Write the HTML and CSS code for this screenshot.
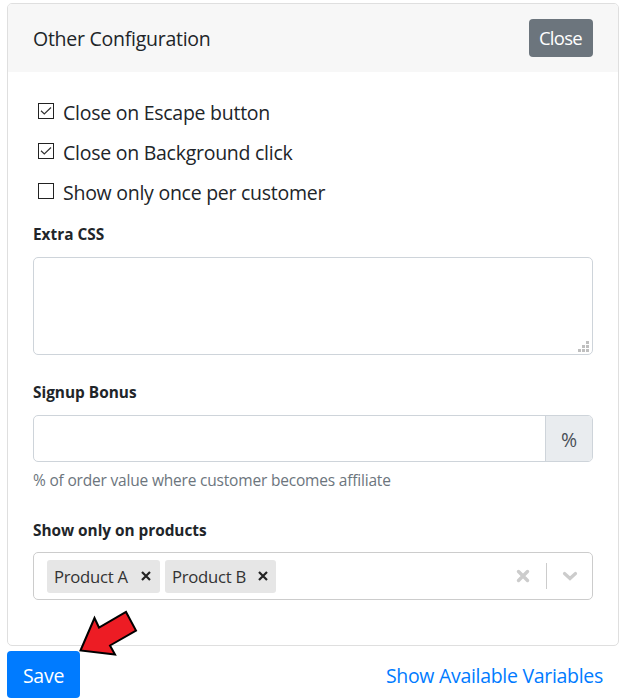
FILE: index.html
```html
<!DOCTYPE html>
<html lang="en">
<head>
<meta charset="utf-8">
<title>Other Configuration</title>
<link rel="stylesheet" href="styles.css">
</head>
<body>
<main class="page">
  <section class="card">
    <header class="card-header">
      <span class="title">Other Configuration</span>
      <button class="btn close-btn" type="button"><span>Close</span></button>
    </header>
    <div class="card-body">
      <div class="check"><span class="box"><svg viewBox="0 0 16 16"><path d="M3 7.8 6.3 11 13 4.5"/></svg></span><span class="check-text">Close on Escape button</span></div>
      <div class="check"><span class="box"><svg viewBox="0 0 16 16"><path d="M3 7.8 6.3 11 13 4.5"/></svg></span><span class="check-text">Close on Background click</span></div>
      <div class="check"><span class="box"></span><span class="check-text">Show only once per customer</span></div>
      <div class="label label-css"><span>Extra CSS</span></div>
      <div class="textarea">
        <svg class="grip" viewBox="0 0 11 11"><path d="M8 0h3v3H8zM4 4h3v3H4zM8 4h3v3H8zM0 8h3v3H0zM4 8h3v3H4zM8 8h3v3H8z"/></svg>
      </div>
      <div class="label label-bonus"><span>Signup Bonus</span></div>
      <div class="input-group"><div class="input"></div><div class="addon">%</div></div>
      <div class="help"><span>% of order value where customer becomes affiliate</span></div>
      <div class="label label-products"><span>Show only on products</span></div>
      <div class="select">
        <div class="tag"><span class="tag-text">Product A</span><svg class="remove" viewBox="0 0 10 10"><path d="M1 1 9 9M9 1 1 9"/></svg></div>
        <div class="tag"><span class="tag-text">Product B</span><svg class="remove" viewBox="0 0 10 10"><path d="M1 1 9 9M9 1 1 9"/></svg></div>
        <svg class="clear" viewBox="0 0 14 14"><path d="M2.500 2.500 11.500 11.500M11.500 2.500 2.500 11.500"/></svg>
        <span class="divider"></span>
        <svg class="chevron" viewBox="0 0 16 10"><path d="M2.500 2.500 8 7.500 13.500 2.500"/></svg>
      </div>
    </div>
  </section>
  <footer class="actions">
    <button class="btn save-btn" type="button"><span>Save</span></button>
    <a class="link">Show Available Variables</a>
  </footer>
  <svg class="arrow" viewBox="0 0 60 48"><path d="M1.5 41.5 15.5 9 20 18.5 47 3 57 21.500 31 36.500 36 45.500Z"/></svg>
</main>
</body>
</html>
```
FILE: styles.css
```css
* { box-sizing: border-box; }
body { margin: 0; background: #fff; color: #212529; font-family: "Open Sans", "Noto Sans", sans-serif; font-size: 19.5px; line-height: 30px; }
.page { position: relative; height: 700px; padding: 3px 6px 0 7px; overflow: hidden; }
.card { height: 643px; border: 1px solid #dfdfdf; border-radius: 5px; overflow: hidden; }
.card-header { height: 68px; padding: 0 25px; background: #f7f7f7; display: flex; align-items: center; justify-content: space-between; }
.title, .check-text, .link { white-space: nowrap; letter-spacing: -0.26px; }
.title { padding-top: 2px; }
.btn { border: 0; border-radius: 4px; padding: 2px 0 0; color: #fff; font: inherit; text-align: center; white-space: nowrap; }
.close-btn { width: 64px; height: 38px; padding: 0 1px 0 0; background: #6c757d; font-size: 18.5px; letter-spacing: -0.7px; }
.card-body { padding: 22px 25px 0; }
.check { display: flex; height: 40px; padding: 4px 0 0 5px; }
.box { width: 16px; height: 16px; margin: 5px 9px 0 0; border: 1px solid #222; flex: none; }
.box svg { display: block; width: 16px; height: 16px; margin: -1px; fill: none; stroke: #333; stroke-width: 1.2; }
.label { font-size: 15.4px; font-weight: 700; line-height: 24px; white-space: nowrap; }
.label-css { margin-top: 9px; }
.textarea { height: 98px; margin-top: 10px; border: 1px solid #ced4da; border-radius: 5px; display: flex; align-items: flex-end; justify-content: flex-end; padding: 2px 3px; }
.grip { width: 11px; height: 11px; fill: #bfbfbf; }
.label-bonus { margin-top: 26px; }
.input-group { height: 47px; margin-top: 10px; border: 1px solid #ced4da; border-radius: 5px; display: flex; overflow: hidden; }
.input { flex: 1; }
.addon { width: 47px; border-left: 1px solid #ced4da; background: #e9ecef; color: #495057; text-align: center; line-height: 47px; }
.help { color: #6c757d; font-size: 15.5px; letter-spacing: -0.19px; line-height: 24px; margin-top: 6px; white-space: nowrap; }
.label-products { margin-top: 27px; letter-spacing: -0.04px; }
.select { height: 48px; margin-top: 9px; border: 1px solid #ccc; border-radius: 5px; display: flex; align-items: center; padding: 0 14px 0 13px; }
.tag { width: 113px; height: 33px; margin-right: 5px; padding: 0 9px 0 7px; background: #e6e6e6; border-radius: 3px; display: flex; align-items: center; justify-content: space-between; color: #333; font-size: 16.7px; letter-spacing: -0.28px; white-space: nowrap; }
.tag + .tag { width: 111px; padding-right: 8px; }
.tag-text { padding-top: 1px; }
.remove { width: 10px; height: 10px; fill: none; stroke: #222; stroke-width: 2.2; }
.clear { width: 14px; height: 14px; margin-left: auto; fill: none; stroke: #ccc; stroke-width: 3.4; stroke-linecap: round; }
.divider { width: 1px; height: 26px; margin: 0 15px 0 16px; background: #ccc; }
.chevron { width: 16px; height: 10px; fill: none; stroke: #ccc; stroke-width: 3.2; stroke-linecap: round; }
.actions { display: flex; justify-content: space-between; margin-top: 5px; padding-right: 16px; }
.save-btn { width: 73px; height: 47px; background: #007bff; letter-spacing: -0.25px; }
.link { color: #007bff; line-height: 50px; letter-spacing: -0.3px; }
.arrow { position: absolute; left: 79px; top: 609px; width: 60px; height: 48px; fill: #ed1c24; stroke: #000; stroke-width: 2; }
```
